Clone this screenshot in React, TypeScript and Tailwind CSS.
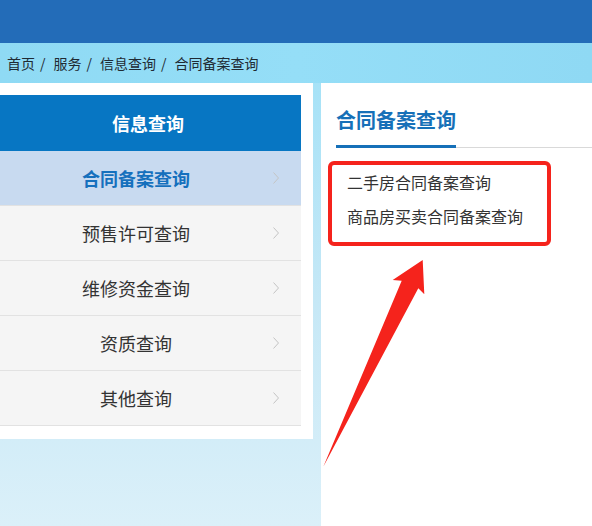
import React from "react";

const font = { fontFamily: '"Microsoft YaHei", "Noto Sans CJK SC", "Noto Sans", sans-serif' };

function Chevron() {
  return (
    <svg width="6" height="12" viewBox="0 0 6 12" className="ml-[1px] mr-[22px] shrink-0">
      <polyline points="0.5,0.5 5.5,6 0.5,11.5" fill="none" stroke="#c4c4c4" strokeWidth="1" />
    </svg>
  );
}

const items = ["合同备案查询", "预售许可查询", "维修资金查询", "资质查询", "其他查询"];

export default function App() {
  return (
    <div
      className="relative w-[592px] h-[526px] overflow-hidden flex flex-col"
      style={font}
    >
      <div className="h-[43px] bg-[#236cb8] shrink-0" />
      <div className="h-[40px] shrink-0 bg-gradient-to-r from-[#8fdaf4] via-[#95def7] to-[#8fd9f4] flex items-center pl-[7px] text-[14px] text-[#1f2a33]">
        <span>首页</span>
        <span className="ml-[5px] mr-[8px]">/</span>
        <span>服务</span>
        <span className="ml-[5px] mr-[8px]">/</span>
        <span>信息查询</span>
        <span className="ml-[5px] mr-[8px]">/</span>
        <span>合同备案查询</span>
      </div>
      <div className="flex-1 flex bg-gradient-to-b from-[#a6e2f7] via-[#c6e8f6] to-[#dbf0f9]">
        <div className="w-[313px] shrink-0 self-start">
          <div className="bg-white pt-[12px] pr-[12px] pb-[13px]">
            <div className="h-[56px] bg-[#0776c3] flex items-center justify-center pr-[5px] text-white text-[18px] font-bold">
              信息查询
            </div>
            {items.map((t, i) => (
              <div
                key={t}
                className={
                  i === 0
                    ? "h-[54px] bg-[#c8daf0] flex items-center"
                    : "h-[55px] bg-[#f5f5f5] border-t border-[#e2e2e2] flex items-center"
                }
              >
                <span
                  className={
                    i === 0
                      ? "flex-1 text-center text-[18px] font-bold text-[#1570bd]"
                      : "flex-1 text-center text-[18px] text-[#333333]"
                  }
                >
                  {t}
                </span>
                <Chevron />
              </div>
            ))}
            <div className="border-t border-[#e2e2e2]" />
          </div>
        </div>
        <div className="ml-[8px] flex-1 bg-white">
          <div className="ml-[15px] border-b border-[#d9d9d9] pt-[23px]">
            <div className="inline-block text-[20px] leading-[28px] font-bold text-[#1670b8] pb-[11px] border-b-[3px] border-[#1670b8] mb-[-1px]">
              合同备案查询
            </div>
          </div>
          <div className="ml-[7px] mt-[13px] w-[223px] border-[4px] border-[#f5231c] rounded-[6px] pl-[15px] pb-[9px] text-[16px] leading-[34px] text-[#333333]">
            <div>二手房合同备案查询</div>
            <div>商品房买卖合同备案查询</div>
          </div>
        </div>
      </div>
      <svg
        className="absolute left-0 top-0 pointer-events-none"
        width="592"
        height="526"
        viewBox="0 0 592 526"
      >
        <polygon
          points="323.3,466.7 401.7,280.7 392.7,280 422.7,260 424.3,294.3 418.3,288.3"
          fill="#f5231c"
        />
      </svg>
    </div>
  );
}
